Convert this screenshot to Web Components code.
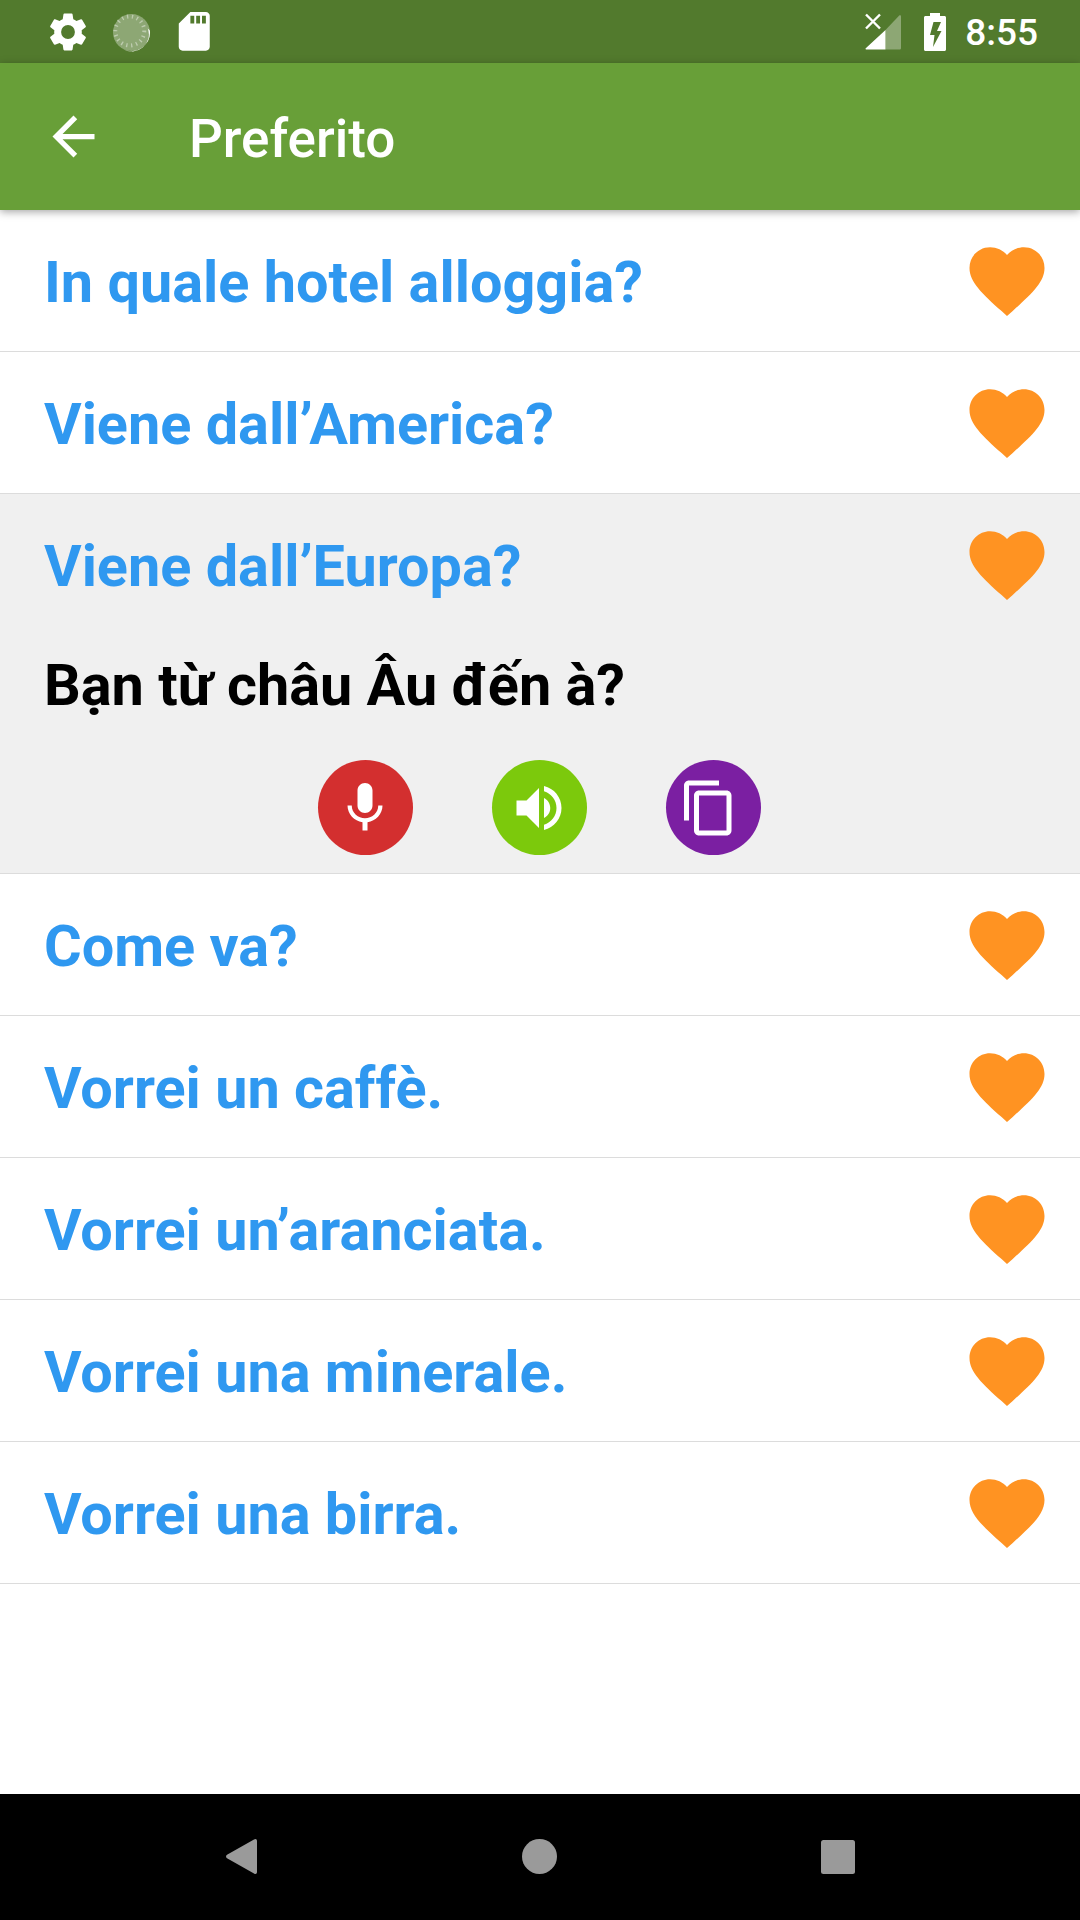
<!DOCTYPE html>
<html lang="it">
<head>
<meta charset="UTF-8">
<title>Preferito</title>
<style>
    html, body { margin: 0; padding: 0; }
    body { width: 1080px; height: 1920px; background: #fff; font-family: Roboto, "Noto Sans", sans-serif; display: flex; flex-direction: column; overflow: hidden; }
    phrase-list { flex: 1; }
</style>
</head>
<body>
    <status-bar></status-bar>
    <app-bar>Preferito</app-bar>
    <phrase-list>
        <phrase-row>In quale hotel alloggia?</phrase-row>
        <phrase-row>Viene dall’America?</phrase-row>
        <phrase-row open>
            Viene dall’Europa?
            <span slot="translation">Bạn từ châu Âu đến à?</span>
            <round-button slot="actions" color="#d32f2f" icon="mic"></round-button>
            <round-button slot="actions" color="#7cc90c" icon="volume"></round-button>
            <round-button slot="actions" color="#7b1fa2" icon="copy" shift="-4"></round-button>
        </phrase-row>
        <phrase-row>Come va?</phrase-row>
        <phrase-row>Vorrei un caffè.</phrase-row>
        <phrase-row>Vorrei un’aranciata.</phrase-row>
        <phrase-row>Vorrei una minerale.</phrase-row>
        <phrase-row>Vorrei una birra.</phrase-row>
    </phrase-list>
    <nav-bar></nav-bar>

    <template id="status-bar-tpl">
        <style>
            :host { display: flex; align-items: center; height: 63px; background: #527a2d; color: #fff; padding: 0 42px 0 45px; flex: none; }
            svg { display: block; fill: #fff; }
            .left { display: flex; gap: 17px; align-items: center; }
            .right { margin-left: auto; display: flex; align-items: center; }
            .time { font: 500 37px Roboto, sans-serif; margin-left: 19px; line-height: 63px; padding-top: 2px; }
        </style>
        <div class="left">
            <svg width="46" height="46" viewBox="0 0 24 24"><path d="M19.14 12.94c.04-.3.06-.61.06-.94 0-.32-.02-.64-.07-.94l2.03-1.58a.49.49 0 0 0 .12-.61l-1.92-3.32a.488.488 0 0 0-.59-.22l-2.39.96c-.5-.38-1.03-.7-1.62-.94l-.36-2.54a.484.484 0 0 0-.48-.41h-3.84c-.24 0-.43.17-.47.41l-.36 2.54c-.59.24-1.13.57-1.62.94l-2.39-.96c-.22-.08-.47 0-.59.22L2.74 8.87c-.12.21-.08.47.12.61l2.03 1.58c-.05.3-.09.63-.09.94s.02.64.07.94l-2.03 1.58a.49.49 0 0 0-.12.61l1.92 3.32c.12.22.37.29.59.22l2.39-.96c.5.38 1.03.7 1.62.94l.36 2.54c.05.24.24.41.48.41h3.84c.24 0 .44-.17.47-.41l.36-2.54c.59-.24 1.13-.56 1.62-.94l2.39.96c.22.08.47 0 .59-.22l1.92-3.32c.12-.22.07-.47-.12-.61l-2.01-1.58zM12 15.6A3.6 3.6 0 1 1 12 8.4a3.6 3.6 0 0 1 0 7.2z"/></svg>
            <svg width="46" height="46" viewBox="0 0 46 46">
                <circle cx="23.500" cy="23.500" r="18.500" fill="#fff" fill-opacity=".34"/>
                <path d="M41.800 21.500A18.500 18.500 0 0 1 15 40 A 17 17 0 0 0 39.800 19.500z" fill="#fff"/>
                <circle cx="21.800" cy="22" r="14.500" fill="none" stroke="#fff" stroke-opacity=".42" stroke-width="4" stroke-dasharray="1.300 3.700"/>
            </svg>
            <svg width="46.500" height="46.500" viewBox="0 0 24 24"><path d="M18 2h-8L4.020 8 4 20c0 1.100.9 2 2 2h12c1.100 0 2-.9 2-2V4c0-1.100-.9-2-2-2zm-6 6h-2V4h2v4zm3 0h-2V4h2v4zm3 0h-2V4h2v4z"/></svg>
        </div>
        <div class="right">
            <svg width="36" height="37" viewBox="0 0 36 37" style="margin-right:23px">
                <path d="M20.500 17v19.500H1.800c-1.300 0-1.700-.8-.8-1.600z"/>
                <path d="M20.500 17 34 2.800c.8-.8 2-.5 2 .6v31.600c0 1-.7 1.500-1.500 1.500H20.500z" fill-opacity=".34"/>
                <path d="M1 1.500 15 15.500M15 1.500 1 15.500" stroke="#fff" stroke-width="2.400" fill="none"/>
            </svg>
            <svg width="22" height="38" viewBox="0 0 22 38">
                <path fill-rule="evenodd" d="M6 0h10v3h4.500c.8 0 1.500.7 1.500 1.500v32c0 .8-.7 1.500-1.500 1.500h-19C.7 38 0 37.300 0 36.500v-32C0 3.700.7 3 1.500 3H6zM9.500 9 6 22h4.500L9 34l8.500-16H13l4-9z"/>
            </svg>
            <span class="time">8:55</span>
        </div>
    </template>

    <template id="app-bar-tpl">
        <style>
            :host { display: flex; align-items: center; height: 147px; background: #689f38; color: #fff; flex: none; position: relative; z-index: 1; box-shadow: 0 2px 8px rgba(0,0,0,.35); }
            svg { display: block; fill: #fff; margin-left: 42px; flex: none; }
            .title { font: 500 53px Roboto, sans-serif; margin-left: 84px; padding-top: 4px; }
        </style>
        <svg width="63" height="63" viewBox="0 0 24 24"><path d="M20 11H7.830l5.590-5.590L12 4l-8 8 8 8 1.410-1.410L7.830 13H20v-2z"/></svg>
        <span class="title"><slot></slot></span>
    </template>

    <template id="phrase-list-tpl">
        <style>
            :host { display: block; background: #fff; }
        </style>
        <slot></slot>
    </template>

    <template id="phrase-row-tpl">
        <style>
            :host { display: block; border-bottom: 1px solid #dcdcdc; box-sizing: border-box; }
            :host([open]) { background: #f0f0f0; }
            .head { display: flex; align-items: center; height: 141px; padding: 0 28px 0 44px; }
            .text { flex: 1; font: 700 57.600px Roboto, sans-serif; color: #2f98f0; white-space: nowrap; padding-top: 4px; }
            svg { display: block; fill: #ff9322; flex: none; }
            .more { display: none; }
            :host([open]) .more { display: block; }
            .translation { font: 700 57.600px Roboto, "Noto Sans", sans-serif; color: #000; padding: 0 44px; height: 100px; display: flex; align-items: center; }
            .actions { display: flex; justify-content: center; gap: 79px; padding: 25px 2px 18px 0; }
        </style>
        <div class="head">
            <span class="text"><slot></slot></span>
            <svg width="90" height="90" viewBox="0 0 24 24"><path d="M12 21.350l-1.450-1.320C5.400 15.360 2 12.280 2 8.500 2 5.420 4.420 3 7.500 3c1.740 0 3.410.81 4.500 2.090C13.090 3.810 14.760 3 16.500 3 19.580 3 22 5.420 22 8.500c0 3.780-3.400 6.860-8.550 11.540L12 21.350z"/></svg>
        </div>
        <div class="more">
            <div class="translation"><slot name="translation"></slot></div>
            <div class="actions"><slot name="actions"></slot></div>
        </div>
    </template>

    <template id="nav-bar-tpl">
        <style>
            :host { display: flex; align-items: center; height: 126px; background: #000; flex: none; padding: 0 0 1px 226px; box-sizing: border-box; }
            svg { display: block; fill: #9a9a9a; flex: none; }
        </style>
        <svg width="31" height="35" viewBox="0 0 31 35" style="margin-right:265px"><path d="M28 .6c1.600-1.200 3-.4 3 1.400v31c0 1.800-1.400 2.600-3 1.400L1 19.200c-1.300-.9-1.300-2.500 0-3.400z"/></svg>
        <svg width="35" height="35" viewBox="0 0 35 35" style="margin-right:264px"><circle cx="17.500" cy="17.500" r="17.500"/></svg>
        <svg width="34" height="34" viewBox="0 0 34 34"><rect width="34" height="34" rx="2.500"/></svg>
    </template>

    <script>
        const icons = {
            mic: "M12 14c1.660 0 3-1.340 3-3V5c0-1.660-1.340-3-3-3S9 3.340 9 5v6c0 1.660 1.340 3 3 3zm5.300-3c0 3-2.540 5.100-5.300 5.100S6.700 14 6.700 11H5c0 3.410 2.720 6.230 6 6.720V21h2v-3.280c3.280-.48 6-3.300 6-6.720h-1.700z",
            volume: "M3 9v6h4l5 5V4L7 9H3zm13.500 3c0-1.770-1.020-3.290-2.500-4.030v8.050c1.480-.73 2.500-2.250 2.500-4.020zM14 3.230v2.060c2.890.86 5 3.540 5 6.710s-2.110 5.850-5 6.710v2.060c4.010-.91 7-4.490 7-8.770s-2.990-7.860-7-8.770z",
            copy: "M16 1H4c-1.100 0-2 .9-2 2v14h2V3h12V1zm3 4H8c-1.100 0-2 .9-2 2v14c0 1.100.9 2 2 2h11c1.100 0 2-.9 2-2V7c0-1.100-.9-2-2-2zm0 16H8V7h11v14z"
        };

        // plain elements: everything comes from their template
        function fromTemplate(name) {
            customElements.define(name, class extends HTMLElement {
                constructor() {
                    super();
                    const tpl = document.getElementById(name + "-tpl");
                    this.attachShadow({mode: "open"}).appendChild(tpl.content.cloneNode(true));
                }
            });
        }
        ["status-bar", "app-bar", "phrase-list", "phrase-row", "nav-bar"].forEach(fromTemplate);

        class RoundButton extends HTMLElement {
            constructor() {
                super();
                this.attachShadow({mode: "open"});
            }
            connectedCallback() {
                const shift = this.getAttribute("shift") || 0;
                this.shadowRoot.innerHTML = `
                <style>
                    :host { display: flex; align-items: center; justify-content: center; width: 95px; height: 95px; border-radius: 50%; background: ${this.getAttribute("color")}; flex: none; }
                    svg { display: block; fill: #fff; transform: translateX(${shift}px); }
                </style>
                <svg width="60" height="60" viewBox="0 0 24 24"><path d="${icons[this.getAttribute("icon")]}"/></svg>`;
            }
        }
        customElements.define("round-button", RoundButton);
    </script>
</body>
</html>
